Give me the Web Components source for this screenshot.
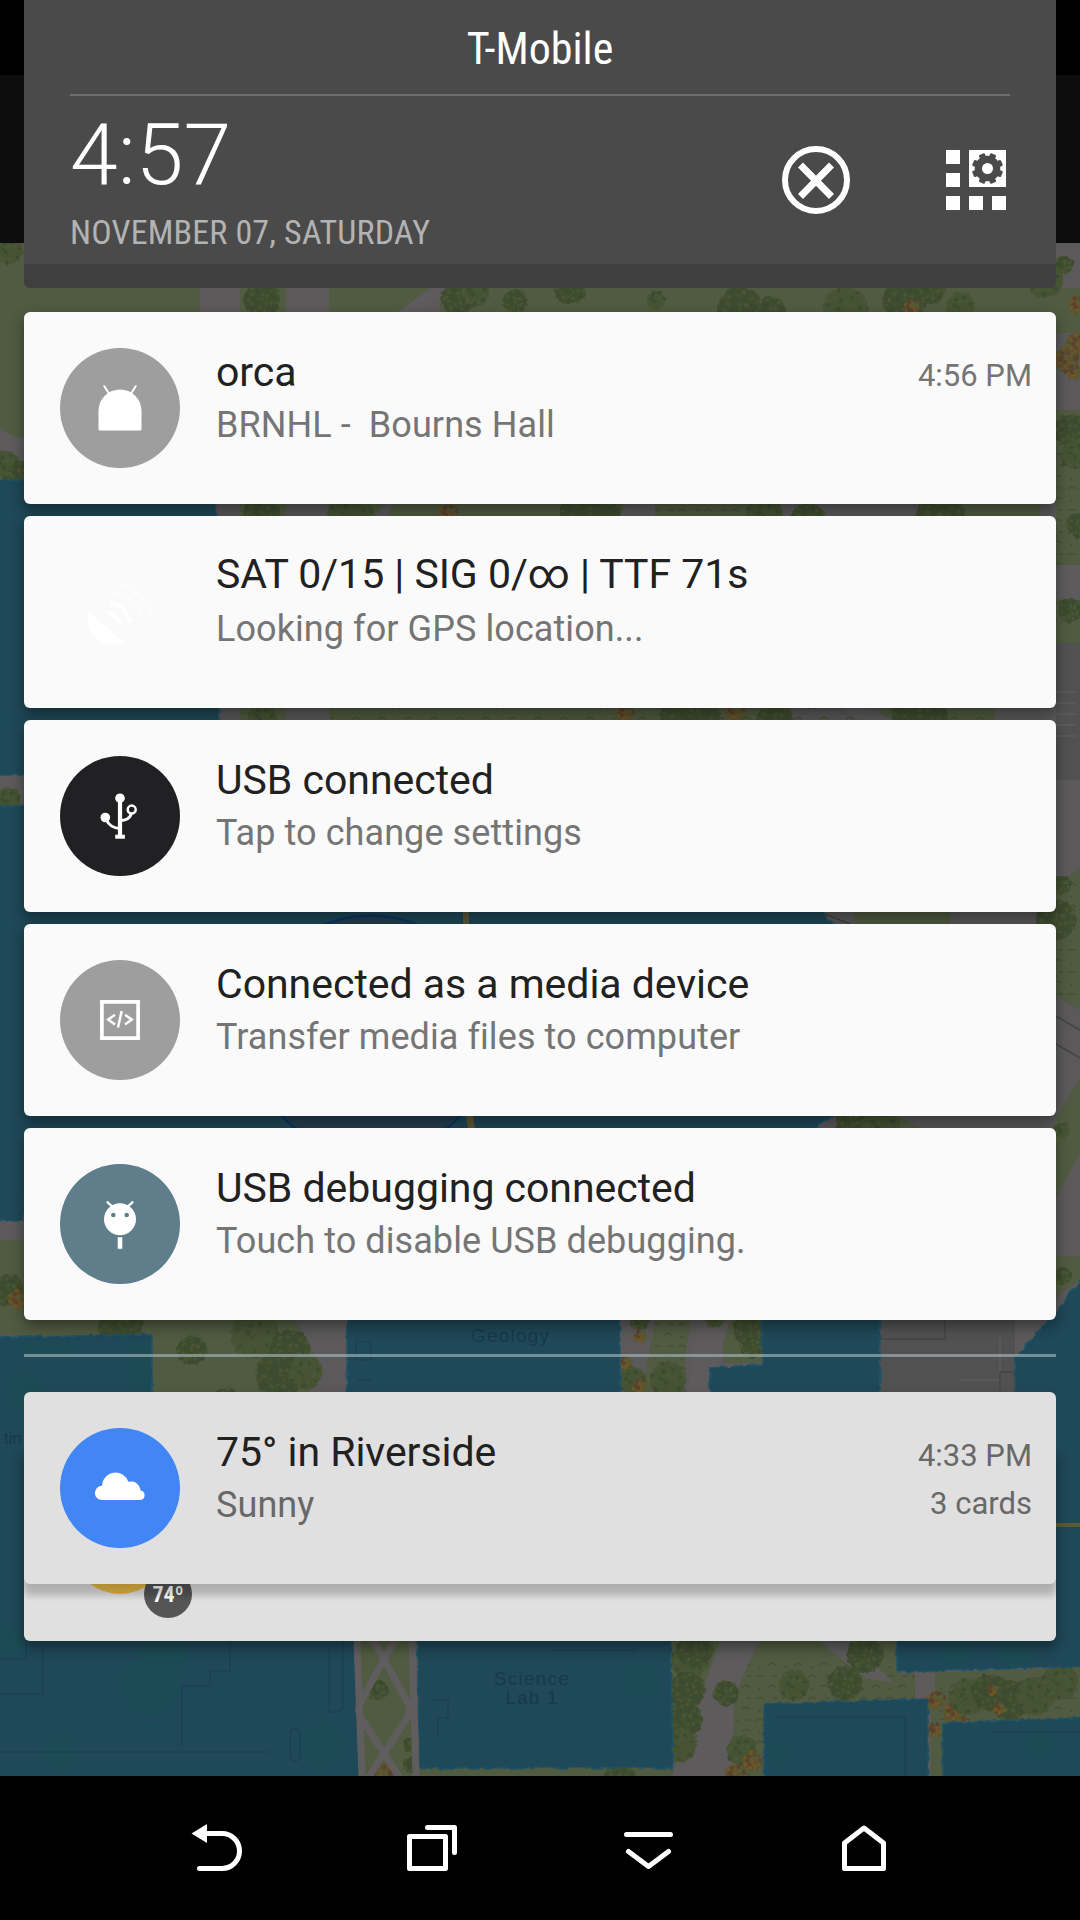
<!DOCTYPE html>
<html lang="en">
<head>
<meta charset="utf-8">
<title>Notifications</title>
<style>
    html, body {
        margin: 0;
        background: #000;
    }

    body {
        width: 1080px;
        height: 1920px;
        overflow: hidden;
        font-family: Roboto, "Liberation Sans", sans-serif;
    }
</style>
</head>
<body>
<phone-screen>
    <campus-map slot="backdrop"></campus-map>
    <shade-header carrier="T-Mobile" time="4:57" date="NOVEMBER 07, SATURDAY"></shade-header>
    <notification-list>
        <notification-card icon="android" color="#9e9e9e">
            <span slot="title">orca</span>
            <span slot="text">BRNHL -&nbsp; Bourns Hall</span>
            <span slot="time">4:56 PM</span>
        </notification-card>
        <notification-card icon="gps" color="transparent" raised>
            <span slot="title">SAT 0/15 | SIG 0/∞ | TTF 71s</span>
            <span slot="text">Looking for GPS location...</span>
        </notification-card>
        <notification-card icon="usb" color="#212123">
            <span slot="title">USB connected</span>
            <span slot="text">Tap to change settings</span>
        </notification-card>
        <notification-card icon="code" color="#9e9e9e">
            <span slot="title">Connected as a media device</span>
            <span slot="text">Transfer media files to computer</span>
        </notification-card>
        <notification-card icon="debug" color="#607d8b">
            <span slot="title">USB debugging connected</span>
            <span slot="text">Touch to disable USB debugging.</span>
        </notification-card>
    </notification-list>
    <card-stack>
        <notification-card icon="cloud" color="#4285f4" dim>
            <span slot="title">75° in Riverside</span>
            <span slot="text">Sunny</span>
            <span slot="time">4:33 PM</span>
            <span slot="info">3 cards</span>
        </notification-card>
        <notification-card slot="under" icon="none" color="#e8b844" dim badge="74º"></notification-card>
    </card-stack>
    <nav-bar slot="nav"></nav-bar>
</phone-screen>

<script>
/**
 * Glyphs for the round notification icons, on a 120x120 canvas.
 */
const ICONS = {
    none: '',
    android: `
        <path fill="#fff" d="M38.5 62.5a21.5 21 0 0 1 43 0V81a1.6 1.6 0 0 1-1.6 1.6H40.1A1.6 1.6 0 0 1 38.5 81z"/>
        <path stroke="#fff" stroke-width="2" stroke-linecap="round" d="M44.3 38.2l4.5 7M75.7 38.2l-4.5 7"/>`,
    gps: `
        <path fill="#fff" d="M28.5 59L64.5 90.5C46 99 22 84 28.5 59z"/>
        <g fill="none" stroke="#fff" stroke-width="4" stroke-linecap="round">
            <path d="M49 60.5q7 3 10.5 10.5M52 50.5q13 5 18 18"/>
            <path opacity=".4" d="M55 41q20 5 26.5 23M58 31q25 7 33 30"/>
        </g>`,
    usb: `
        <circle cx="60" cy="42.2" r="4.8" fill="#fff"/>
        <circle cx="45.3" cy="61.5" r="4.8" fill="#fff"/>
        <g fill="none" stroke="#fff">
            <path stroke-width="4.2" d="M60 42v38"/>
            <path stroke-width="4" d="M55.2 80.7h9.7"/>
            <path stroke-width="3" d="M46.5 64Q50 72 60 72.5M71.3 58Q69 64.5 60 64.5"/>
            <circle cx="71.7" cy="53.6" r="4" stroke-width="2.5"/>
        </g>`,
    code: `
        <g fill="none" stroke="#fff">
            <rect x="41.9" y="41.9" width="36.2" height="36.2" stroke-width="3.7"/>
            <path stroke-width="2.5" d="M55 54.7l-6.8 4.9 6.8 4.9M65 54.7l6.8 4.9-6.8 4.9M58 67.5l3.7-16.5"/>
        </g>`,
    debug: `
        <circle cx="60" cy="55.3" r="16" fill="#fff"/>
        <path stroke="#fff" stroke-width="2.4" stroke-linecap="round" d="M47.6 38.3l5.5 5M72.4 38.3l-5.5 5"/>
        <circle cx="53.3" cy="51" r="2.3" fill="#607d8b"/>
        <circle cx="66.7" cy="51" r="2.3" fill="#607d8b"/>
        <path fill="#fff" d="M57.7 73.2h4.6v11.6h-4.6z"/>`,
    cloud: `
        <path fill="#fff" d="M42 72a7 7 0 0 1 0-14.2 13.5 13.5 0 0 1 26.3-4 9.6 9.6 0 0 1 12.2 8.7 4.8 4.8 0 0 1 0 9.5z"/>`
};

/**
 * Full screen frame. Backdrop below, shade in the middle, nav bar at the end.
 */
class PhoneScreen extends HTMLElement {
    constructor() {
        super();
        this.attachShadow({mode: "open"});
        this.shadowRoot.innerHTML = `
            <style>
                :host {
                    display: grid;
                    grid-template-rows: 1776px 144px;
                    width: 1080px;
                    height: 1920px;
                    overflow: hidden;
                }

                slot[name="backdrop"]::slotted(*), .shade {
                    grid-area: 1 / 1;
                }

                .shade {
                    display: flex;
                    flex-direction: column;
                    padding: 0 24px;
                    z-index: 1;
                }
            </style>
            <slot name="backdrop"></slot>
            <div class="shade"><slot></slot></div>
            <slot name="nav"></slot>
        `;
    }
}

/**
 * Dimmed campus map behind the notification shade.
 */
class CampusMap extends HTMLElement {
    constructor() {
        super();
        this.attachShadow({mode: "open"});
        this.shadowRoot.innerHTML = `
            <style>
                :host {
                    display: block;
                    height: 1776px;
                    overflow: hidden;
                }

                svg {
                    display: block;
                }

                text {
                    font: 19px "Liberation Sans", sans-serif;
                    letter-spacing: 1.2px;
                    fill: #18394a;
                }

                .edge {
                    font-size: 17px;
                    letter-spacing: 0;
                }
            </style>
            <svg width="1080" height="1776" viewBox="0 0 1080 1776">
                <defs>
                    <pattern id="grass" width="26" height="22" patternUnits="userSpaceOnUse">
                        <path d="M2 5l4-2 4 2M14 15l4-2 4 2M19 4h4M4 17h3" fill="none" stroke="#434f36" stroke-width="1.5"/>
                    </pattern>
                    <filter id="rough" filterUnits="userSpaceOnUse" x="-20" y="0" width="1120" height="1800" color-interpolation-filters="sRGB">
                        <feTurbulence type="fractalNoise" baseFrequency=".15" numOctaves="2" seed="4"/>
                        <feDisplacementMap in="SourceGraphic" scale="5" xChannelSelector="R" yChannelSelector="G"/>
                    </filter>
                </defs>
                <rect width="1080" height="1776" fill="#5b595a"/>
                <g fill="#515b41">
                    <path d="M0 243h200v180L0 440zM240 288h46v436h-46zM329 288h111l-60 60v372h-51zM440 288h640v45h-24l-20-20H440zM380 504h500v12H380zM330 708h450v12H330zM880 708h115v12H880zM960 504h80v12h-80z"/>
                    <path d="M855 912h95v12h-95zM840 1116h60l20 12h-80zM1056 410h24v155h-24zM1056 600h24v43h-24zM1080 868v142l-24-14V885zM1080 1078v75l-24 45v-80zM1056 1256h24v24l-24 16z"/>
                    <path d="M0 1240h24v95H0zM24 1320h170v20H24zM152 1320h142l30 50-15 22H152zM655 1320h35l-8 72h-40zM720 1320h42v43h-38z"/>
                    <path d="M355 1641h60l4 135h-58zM668 1641h53l-16 90-32 35h-5zM419 1768h254v8H419zM760 1641h138v33l185-7v52l-140 5v52h-12v-74l-165 4v72h-32v-85z"/>
                </g>
                <path fill="url(#grass)" d="M560 504h330v12H560zM330 708h660v12H330zM1056 440h24v125h-24zM1056 880h24v120h-24zM655 1320h35v72h-35zM735 1660h180v116H735zM935 1680h145v40H935z"/>
                <g fill="#5d5b5c">
                    <path d="M720 1641h37l-22 55-6 80h-56l20-60zM820 1641h30l44 42-30-5-45-37zM915 1673h20v30h-20zM0 430l24 10v22L0 448zM730 1320l-20 72h-22l10-72z"/>
                    <path d="M384 504h10l-7 12h-12zM625 504h30v12h-35zM780 504h130v12H780zM840 708h25l30 12h-30zM1056 565h24v32h-24zM430 288h22l-30 24h-24z"/>
                </g>
                <path d="M1056 643h24v137h-24zM880 1320h135v72H880z" fill="#525152"/>
                <path d="M1056 692h20M1056 703h20M1056 714h20M1056 725h20M1056 736h20M1000 1338v54M960 1380h40" stroke="#5a595a" fill="none" stroke-width="2"/>
                <path d="M880 1339h65v-19M1000 1392v-20h15M770 912l30 12M820 912l30 12M1056 1016l24 14M1056 1044l24 14" stroke="#454445" fill="none" stroke-width="1.5"/>
                <g id="trees" filter="url(#rough)"></g>
                <g fill="#1f4858" stroke="#1e5367" stroke-width="1.5" filter="url(#rough)">
                    <path d="M-9 480h224l5 295H-9z"/>
                    <path d="M-9 806h733q30 50 60 60l50 60v190l-35 20H330v60H24v25H-9z"/>
                    <path d="M-9 1338l161-4v166h203l5 290H-9z"/>
                    <path d="M347 1290h273v210H347zM762 1290h118v210H710v-132l52-3zM415 1500h253l5 268H419z"/>
                    <path d="M1090 1268l-34 44-41 46v142H897v172l193-6z"/>
                    <path d="M764 1704l164-5v91H764zM943 1723l150-6v80H943z"/>
                </g>
                <path d="M463 912h6v12h-6zM466 1116h7l2 12h-7zM1056 1523h24v4h-24z" fill="#5d5a38"/>
                <circle cx="371" cy="1035.5" r="120" fill="#25404f" stroke="#0b3766" stroke-width="2.5"/>
                <g fill="none" stroke="#5f5d5e" stroke-width="7">
                    <path d="M357 1641l5 135M412 1641l4 135"/>
                    <path d="M374 1641l34 62q4 8-1 15l-45 69M394 1641l-34 62q-3 8 1 15l45 69"/>
                </g>
                <g fill="#1d4b55">
                    <circle cx="25" cy="1390" r="20"/><circle cx="150" cy="1686" r="30"/><circle cx="323" cy="1745" r="22"/>
                    <circle cx="640" cy="1680" r="18"/><circle cx="60" cy="1755" r="18"/><circle cx="165" cy="1655" r="24"/>
                    <circle cx="955" cy="1652" r="16"/><circle cx="1015" cy="1650" r="17"/><circle cx="1040" cy="1745" r="16"/>
                    <circle cx="8" cy="1640" r="16"/><circle cx="780" cy="1755" r="12"/>
                    <path d="M23 1342h50v16H23zM128 1342h22v50h-22z"/>
                </g>
                <g fill="none" stroke="#1b4152" stroke-width="1.5">
                    <path d="M343 1641v65q0 6-6 6h-8v-65M0 1659h26v-18M0 1694h43v-45M230 1641v30h-20v15h-28v60M356 1342h15v18h-15zM357 1380h15M0 1752h270M430 1700h18v18h-10v20"/>
                    <path d="M775 1717h130v59M993 1732h87M290 1735v20q0 6 5 6t5-6v-20q0-6-5-6t-5 6M552 1650h84"/>
                </g>
                <text x="471" y="1342">Geology</text>
                <text class="edge" x="4" y="1444">tin</text>
                <text x="532" y="1685" text-anchor="middle">Science</text>
                <text x="532" y="1704" text-anchor="middle">Lab 1</text>
                <rect width="1080" height="243" fill="#0d0d0d"/>
                <rect width="1080" height="75" fill="#000"/>
            </svg>
        `;
    }

    connectedCallback() {
        this.drawTrees();
    }

    /**
     * Each clump is [x, y, radius, kind], kind 1 is autumn foliage.
     */
    drawTrees() {
        const clumps = [
            [8, 250, 14], [262, 300, 18], [458, 298, 17], [475, 292, 14], [515, 302, 12], [570, 288, 16], [656, 300, 9],
            [740, 310, 23], [770, 312, 16], [846, 310, 23], [905, 300, 22], [930, 288, 16], [1045, 280, 18], [1064, 265, 9],
            [912, 308, 8, 1], [960, 306, 14], [1078, 305, 9, 1], [1066, 360, 12, 1], [1078, 345, 12, 1], [1074, 372, 7, 1],
            [1070, 430, 16], [1076, 455, 15], [1078, 525, 12], [1070, 610, 12], [6, 465, 14], [20, 474, 12],
            [262, 512, 18], [350, 514, 22], [448, 513, 9, 1], [590, 514, 30], [765, 514, 18], [808, 520, 17], [940, 520, 26],
            [262, 718, 14], [625, 714, 9, 1], [690, 716, 30], [735, 712, 9, 1], [775, 720, 18], [920, 716, 28],
            [8, 800, 12], [1062, 885, 9], [1056, 920, 20], [880, 1124, 20], [850, 1120, 14],
            [8, 1290, 16], [18, 1300, 10, 1], [120, 1325, 22], [192, 1350, 15], [255, 1335, 24], [290, 1350, 20],
            [280, 1375, 24], [305, 1372, 17], [225, 1404, 16], [640, 1336, 6, 1], [632, 1380, 14], [640, 1386, 7, 1],
            [626, 1362, 6, 1], [668, 1380, 18], [750, 1330, 16], [640, 1320, 10], [715, 1318, 10], [752, 1345, 12],
            [378, 1690, 10], [380, 1776, 13, 1], [410, 1745, 7], [412, 1765, 8], [690, 1660, 19], [687, 1690, 18],
            [684, 1720, 18], [680, 1745, 17], [695, 1650, 18], [726, 1693, 12], [794, 1685, 15], [845, 1683, 17],
            [865, 1655, 18], [742, 1750, 15], [752, 1762, 10, 1], [735, 1774, 10, 1], [935, 1700, 9, 1], [955, 1712, 12, 1],
            [935, 1730, 7, 1], [968, 1697, 18], [990, 1692, 18], [1010, 1700, 20], [1035, 1696, 19], [993, 1690, 5, 1],
            [1000, 1708, 6, 1], [1060, 1682, 18], [620, 1780, 16], [1062, 1276, 9], [1062, 1130, 8]
        ];
        let markup = '';
        clumps.forEach(([x, y, r, kind], n) => {
            const base = kind ? '#5c4f30' : (n % 3 ? '#3f4c30' : '#465335');
            markup += `<circle cx="${x}" cy="${y}" r="${r}" fill="${base}"/>`;
            // speckle the crown with leaves in lighter and darker tones
            for (let i = 0; i < r * 1.6; i++) {
                const a = i * 2.4;
                const d = r * Math.sqrt(i / (r * 1.6));
                const leaf = kind ? ['#6f5625', '#5a402e', '#575c35'][i % 3] : ['#46542f', '#3c4a2f', '#495637'][i % 3];
                markup += `<circle cx="${(x + d * Math.cos(a)).toFixed(1)}" cy="${(y + d * Math.sin(a)).toFixed(1)}" r="2" fill="${leaf}"/>`;
            }
        });
        this.shadowRoot.querySelector('#trees').innerHTML = markup;
    }
}

/**
 * Top panel with the carrier, the clock and the two shortcut buttons.
 */
class ShadeHeader extends HTMLElement {
    constructor() {
        super();
        this.attachShadow({mode: "open"});
    }

    connectedCallback() {
        // eight teeth around the settings gear
        let teeth = '';
        for (let i = 0; i < 8; i++) {
            teeth += `<rect x="38.3" y="3" width="6.4" height="8" rx="1" transform="rotate(${i * 45 + 22.5} 41.5 18.5)"/>`;
        }
        this.shadowRoot.innerHTML = `
            <style>
                :host {
                    display: flex;
                    flex-direction: column;
                    box-sizing: border-box;
                    height: 288px;
                    padding: 0 46px;
                    border-bottom: 24px solid #3f3f3f;
                    border-radius: 0 0 6px 6px;
                    background: #4a4a4a;
                    color: #fff;
                }

                .carrier {
                    height: 94px;
                    border-bottom: 2px solid #6e6e6e;
                    font-size: 44px;
                    line-height: 98px;
                    text-align: center;
                    font-stretch: 75%;
                }

                .row {
                    display: flex;
                    justify-content: space-between;
                }

                .time {
                    margin-top: 9px;
                    font-size: 86px;
                    font-weight: 300;
                    line-height: 100px;
                }

                .date {
                    margin-top: 7px;
                    color: #b3b3b3;
                    font-size: 34px;
                    letter-spacing: 0.15px;
                    line-height: 40px;
                    font-stretch: 75%;
                }

                .buttons {
                    display: flex;
                    gap: 96px;
                    padding: 50px 4px 0 0;
                }

                svg {
                    display: block;
                }
            </style>
            <div class="carrier">${this.getAttribute('carrier')}</div>
            <div class="row">
                <div>
                    <div class="time">${this.getAttribute('time')}</div>
                    <div class="date">${this.getAttribute('date')}</div>
                </div>
                <div class="buttons">
                    <svg width="68" height="68" viewBox="0 0 68 68" fill="none" stroke="#fff">
                        <circle cx="34" cy="34" r="31" stroke-width="6"/>
                        <path d="M18.5 19l31 31.5M49.5 19l-31 31.5" stroke-width="7"/>
                    </svg>
                    <svg width="60" height="68" viewBox="0 -4 60 68" fill="#fff">
                        <path d="M0 0h14v14H0zM0 23h14v14H0zM0 46h14v14H0zM23 46h14v14H23zM46 46h14v14H46zM23 0h37v37H23z"/>
                        <g fill="#4a4a4a">
                            <circle cx="41.5" cy="18.5" r="12.8"/>
                            ${teeth}
                        </g>
                        <circle cx="41.5" cy="18.5" r="5.5"/>
                    </svg>
                </div>
            </div>
        `;
    }
}

class NotificationList extends HTMLElement {
    constructor() {
        super();
        this.attachShadow({mode: "open"});
        this.shadowRoot.innerHTML = `
            <style>
                :host {
                    display: flex;
                    flex-direction: column;
                    gap: 12px;
                    padding-top: 24px;
                }

                hr {
                    width: 100%;
                    height: 3px;
                    margin: 22px 0 0;
                    border: 0;
                    background: rgba(165, 182, 185, 0.65);
                }
            </style>
            <slot></slot>
            <hr>
        `;
    }
}

/**
 * One notification. The round icon is picked with the icon attribute, the
 * texts are slotted in.
 */
class NotificationCard extends HTMLElement {
    constructor() {
        super();
        this.attachShadow({mode: "open"});
    }

    connectedCallback() {
        const badge = this.getAttribute('badge');
        this.shadowRoot.innerHTML = `
            <style>
                :host {
                    display: flex;
                    box-sizing: border-box;
                    height: 192px;
                    padding: 0 24px 0 36px;
                    border-radius: 6px;
                    background: #fafafa;
                    color: #212121;
                    box-shadow: 0 6px 14px rgba(0, 0, 0, 0.4);
                }

                :host([dim]) {
                    background: #e0e0e0;
                }

                .icon {
                    position: relative;
                    width: 120px;
                    height: 120px;
                    margin-top: 36px;
                    border-radius: 50%;
                    background: ${this.getAttribute('color')};
                }

                .badge {
                    position: absolute;
                    left: 72px;
                    top: 72px;
                    width: 48px;
                    height: 48px;
                    border-radius: 50%;
                    background: #555;
                    color: #fff;
                    font-size: 22px;
                    font-weight: 700;
                    font-stretch: 75%;
                    line-height: 50px;
                    text-align: center;
                }

                :host([badge]) .icon {
                    width: 96px;
                    height: 96px;
                    margin: 49px 12px 0;
                }

                .body {
                    flex: 1;
                    padding: 35px 0 0 36px;
                    white-space: nowrap;
                }

                .title {
                    font-size: 41px;
                    letter-spacing: -0.03px;
                    line-height: 50px;
                }

                :host([raised]) .title {
                    line-height: 46px;
                    padding-bottom: 4px;
                }

                .text {
                    margin-top: 6px;
                    color: #757575;
                    font-size: 36px;
                    letter-spacing: 0.08px;
                    line-height: 44px;
                }

                .side {
                    display: flex;
                    flex-direction: column;
                    gap: 12px;
                    padding-top: 46px;
                    color: #757575;
                    font-size: 31px;
                    line-height: 36px;
                    text-align: right;
                }

                :host([dim]) .text, :host([dim]) .side {
                    color: #686868;
                }
            </style>
            <div class="icon">
                <svg width="120" height="120" viewBox="0 0 120 120">${ICONS[this.getAttribute('icon')]}</svg>
                ${badge ? `<div class="badge">${badge}</div>` : ''}
            </div>
            <div class="body">
                <div class="title"><slot name="title"></slot></div>
                <div class="text"><slot name="text"></slot></div>
            </div>
            <div class="side">
                <slot name="time"></slot>
                <slot name="info"></slot>
            </div>
        `;
    }
}

/**
 * Two overlapping cards, the second one peeks out from under the first.
 */
class CardStack extends HTMLElement {
    constructor() {
        super();
        this.attachShadow({mode: "open"});
        this.shadowRoot.innerHTML = `
            <style>
                :host {
                    display: flex;
                    flex-direction: column;
                    margin-top: 35px;
                }

                .front {
                    z-index: 1;
                    clip-path: inset(-20px 0 -30px 0);
                }

                .front ::slotted(*) {
                    box-shadow: 0 12px 6px rgba(0, 0, 0, 0.16), 0 4px 14px rgba(0, 0, 0, 0.12) !important;
                }

                .under {
                    margin-top: -135px;
                }
            </style>
            <div class="front"><slot></slot></div>
            <div class="under"><slot name="under"></slot></div>
        `;
    }
}

class NavBar extends HTMLElement {
    constructor() {
        super();
        this.attachShadow({mode: "open"});
        this.shadowRoot.innerHTML = `
            <style>
                :host {
                    display: grid;
                    grid-template-columns: repeat(4, 216px);
                    justify-content: center;
                    align-items: center;
                    background: #000;
                }

                svg {
                    display: block;
                    justify-self: center;
                    fill: none;
                    stroke: #fff;
                    stroke-width: 5;
                    stroke-linecap: round;
                    stroke-linejoin: round;
                }
            </style>
            <svg width="60" height="60" viewBox="186 1818 60 60">
                <path d="M204 1833.5h18a17.5 17.5 0 0 1 0 35h-22.5"/>
                <path d="M191.5 1833.5l15.5-9.5v19z" fill="#fff" stroke="none"/>
            </svg>
            <svg width="60" height="60" viewBox="402 1818 60 60">
                <path d="M409.5 1836.5h36v32h-36zM427.5 1827.5h27v25"/>
            </svg>
            <svg width="60" height="60" viewBox="618 1818 60 60">
                <path d="M626.5 1834.5h44M628.5 1851.5l20 15 20-15"/>
            </svg>
            <svg width="60" height="60" viewBox="834 1818 60 60">
                <path d="M864 1828l19.5 15v25.5h-39V1843z"/>
            </svg>
        `;
    }
}

customElements.define("phone-screen", PhoneScreen);
customElements.define("campus-map", CampusMap);
customElements.define("shade-header", ShadeHeader);
customElements.define("notification-list", NotificationList);
customElements.define("notification-card", NotificationCard);
customElements.define("card-stack", CardStack);
customElements.define("nav-bar", NavBar);
</script>
</body>
</html>
